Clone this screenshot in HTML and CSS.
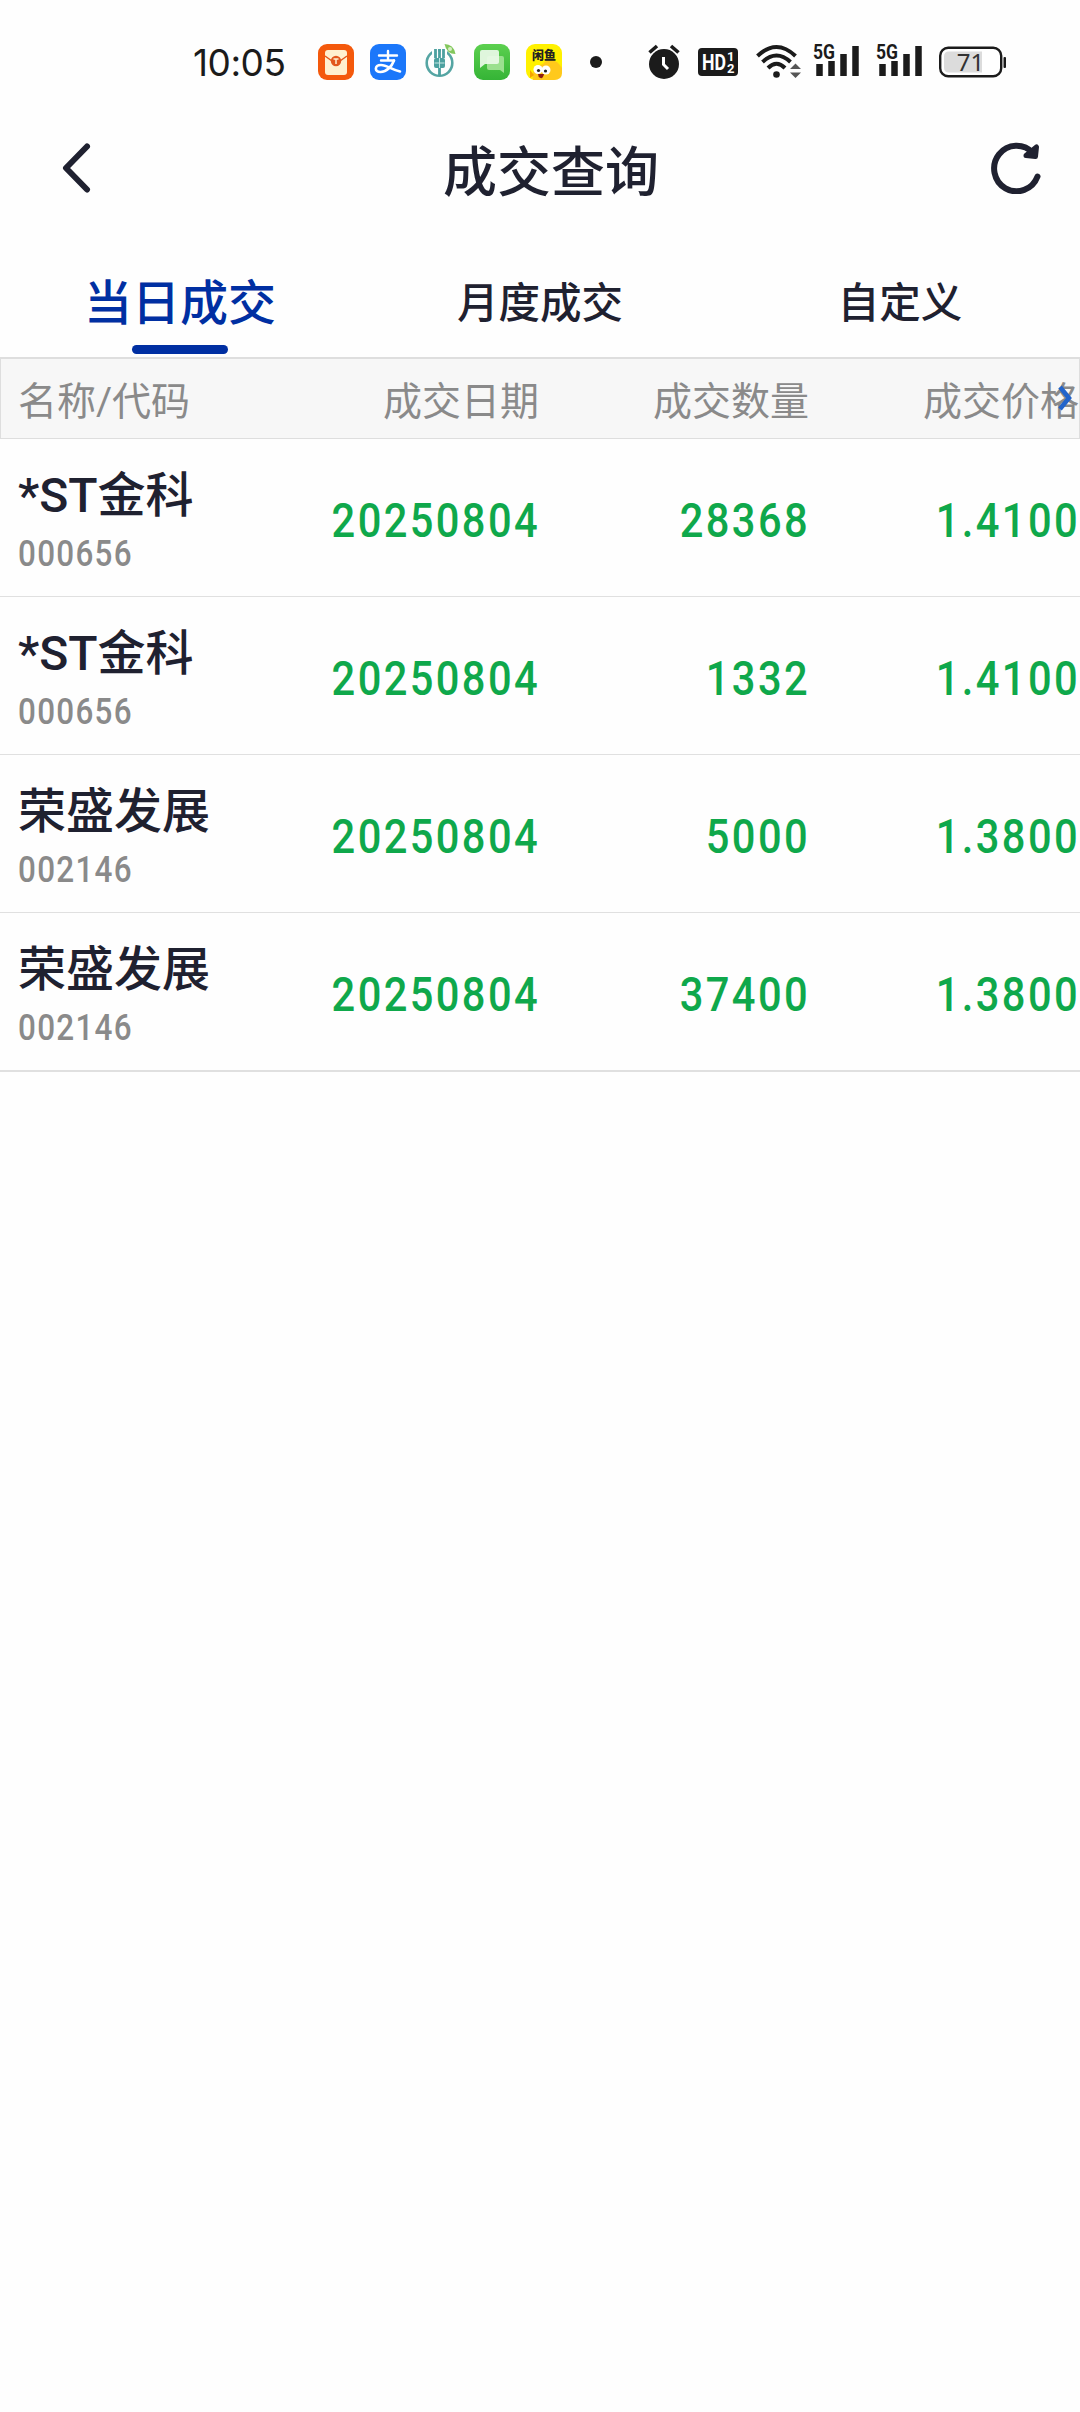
FILE: index.html
```html
<!DOCTYPE html>
<html lang="zh-CN">
<head>
    <meta charset="UTF-8">
    <meta name="viewport" content="width=device-width, initial-scale=1.0">
    <title>成交查询</title>
    <link rel="stylesheet" href="styles.css">
</head>
<body>
    <!-- 状态栏 -->
    <div class="status-bar">
        <span class="time">10:05</span>
        <div class="app-icons">
            <svg width="36" height="36" viewBox="0 0 36 36">
                <rect width="36" height="36" rx="9" fill="#f4590c"/>
                <rect x="7" y="6" width="22" height="25" rx="3" fill="#fff0cf"/>
                <path d="M7 12 L14 17 M29 12 L22 17" stroke="#e2571d" stroke-width="1.5" fill="none"/>
                <circle cx="18" cy="17" r="5.2" fill="#e2571d"/>
                <path d="M15.5 15 H20.5 M18 15 V20" stroke="#fff0cf" stroke-width="1.5"/>
            </svg>
            <svg width="36" height="36" viewBox="0 0 36 36">
                <rect width="36" height="36" rx="9" fill="#1b77fa"/>
                <g fill="none" stroke="#fff" stroke-linecap="round">
                    <path d="M9 11.5 H27 M18 7 V16 M11 16.5 H24" stroke-width="2.4"/>
                    <path d="M24 16.5 C22 22 17 28 10.5 28 C4 28 4.500 21 11 21 C17 21 22 26 30 27.500" stroke-width="2.6"/>
                </g>
            </svg>
            <svg width="36" height="36" viewBox="0 0 36 36">
                <circle cx="17.500" cy="19" r="12.8" fill="none" stroke="#55a5a3" stroke-width="2.6"/>
                <path d="M13 5 V13 M22 5 V13" fill="none" stroke="#fff" stroke-width="6"/>
                <path d="M17.500 32 V5 M13.500 5 V14 M21.500 5 V14" fill="none" stroke="#4da1a0" stroke-width="2.8"/>
                <rect x="12" y="14" width="11" height="10" rx="2" fill="#4da1a0"/>
                <path d="M12.500 19 H22.500 M17.500 14 V24" stroke="#c5e6e3" stroke-width="1"/>
                <path d="M22.500 0 Q31.500 0 33.500 10 Q24.500 10 22.500 0Z" fill="#83c75c"/>
                <circle cx="28" cy="5" r="2" fill="#d6efc4"/>
            </svg>
            <svg width="36" height="36" viewBox="0 0 36 36">
                <defs>
                    <linearGradient id="msg" x1="0" y1="0" x2="0" y2="1">
                        <stop offset="0" stop-color="#5cd04f"/>
                        <stop offset="1" stop-color="#35b436"/>
                    </linearGradient>
                </defs>
                <rect width="36" height="36" rx="9" fill="url(#msg)"/>
                <path d="M15 12 H28 Q30 12 30 14 V29 L26 26 H15 Q13 26 13 24 V14 Q13 12 15 12Z" fill="#9be08f"/>
                <path d="M8 6 H23 Q25 6 25 8 V18 Q25 20 23 20 H11 L6 24 V8 Q6 6 8 6Z" fill="#ecfae9" opacity=".92"/>
            </svg>
            <svg width="36" height="36" viewBox="0 0 36 36">
                <rect width="36" height="36" rx="9" fill="#fff100"/>
                <path d="M7 36 C5 28 9 22 17 20 C20 15 29 15 33 20 L36 24 V29 Q36 36 28 36Z" fill="#ffc91b"/>
                <path d="M4 26 L8 31 L4 34Z" fill="#f6a400"/>
                <circle cx="12" cy="25.500" r="4.500" fill="#fff"/>
                <circle cx="20" cy="26" r="4.500" fill="#fff"/>
                <circle cx="12.500" cy="26.500" r="1.600" fill="#222"/>
                <circle cx="19.500" cy="27" r="1.600" fill="#222"/>
                <path d="M12 30 H18 Q17 35 14.500 34 Q12 33 12 30Z" fill="#8d1c10"/>
                <text x="18" y="15.500" text-anchor="middle" class="fish-text">闲鱼</text>
            </svg>
        </div>
        <span class="dot"></span>
        <div class="sys-icons">
            <svg class="alarm" width="32" height="36" viewBox="0 0 32 36">
                <circle cx="16" cy="20" r="15" fill="#1b1b1b"/>
                <path d="M1.500 8.500 L9 2 M23 2 L30.500 8.500" stroke="#1b1b1b" stroke-width="3.600"/>
                <path d="M15.500 13 V20.500 L20 25" fill="none" stroke="#fff" stroke-width="3"/>
            </svg>
            <svg class="hd" width="40" height="28" viewBox="0 0 40 28">
                <rect width="40" height="28" rx="4" fill="#1b1b1b"/>
                <text x="4" y="22" class="hd-text" textLength="24" lengthAdjust="spacingAndGlyphs">HD</text>
                <text x="29" y="13" class="hd-num">1</text>
                <text x="29" y="25" class="hd-num">2</text>
            </svg>
            <svg class="wifi" width="46" height="36" viewBox="0 0 46 36">
                <g fill="none" stroke="#1b1b1b" stroke-width="4">
                    <path d="M1.500 12 Q20.500 -6 39.500 12"/>
                    <path d="M6.500 18 Q20.500 5 34.500 18"/>
                    <path d="M12 24 Q20.500 15.500 29 24"/>
                </g>
                <circle cx="20.500" cy="30.500" r="3.300" fill="#1b1b1b"/>
                <path d="M34 25 L39.500 19.500 L45 25Z M34 28.500 H45 L39.500 34Z" fill="#555"/>
            </svg>
            <svg class="signal" width="47" height="46" viewBox="0 -5 47 46">
                <text x="0" y="15" class="net-text" textLength="22" lengthAdjust="spacingAndGlyphs">5G</text>
                <path d="M6.500 20V32M18.500 17V32M30.500 10V32M42.500 2V32" stroke="#1b1b1b" stroke-width="6.500"/>
            </svg>
            <svg class="signal" width="47" height="46" viewBox="0 -5 47 46">
                <text x="0" y="15" class="net-text" textLength="22" lengthAdjust="spacingAndGlyphs">5G</text>
                <path d="M6.500 20V32M18.500 17V32M30.500 10V32M42.500 2V32" stroke="#1b1b1b" stroke-width="6.500"/>
            </svg>
            <svg class="battery" width="68" height="32" viewBox="0 0 68 32">
                <rect x="1.200" y="1.700" width="61" height="28.500" rx="8" fill="#fff" stroke="#1b1b1b" stroke-width="2.400"/>
                <path d="M10 5.500 H43 V26.500 H10 Q5 26.500 5 21.500 V10.500 Q5 5.500 10 5.500Z" fill="#dcdcdc"/>
                <rect x="64.500" y="11" width="2.500" height="11" rx="1" fill="#1b1b1b"/>
                <text x="31.500" y="24.500" text-anchor="middle" class="battery-text">71</text>
            </svg>
        </div>
    </div>

    <!-- 标题栏 -->
    <div class="nav-bar">
        <svg class="back" width="30" height="52" viewBox="0 0 30 52">
            <path d="M26 4.500 L5 26 L26 47.500" fill="none" stroke="#1f2130" stroke-width="6" stroke-linecap="round" stroke-linejoin="round"/>
        </svg>
        <h1>成交查询</h1>
        <svg class="refresh" width="50" height="52" viewBox="0 0 50 52">
            <path d="M46.500 34.500 A22.400 22.800 0 1 1 42 11" fill="none" stroke="#1f2130" stroke-width="6" stroke-linecap="round"/>
            <path d="M45.500 5 L44.500 14.500 L35 13.500Z" fill="#1f2130" stroke="#1f2130" stroke-width="5" stroke-linejoin="round"/>
        </svg>
    </div>

    <!-- 标签页 -->
    <div class="tabs">
        <div class="tab active">当日成交</div>
        <div class="tab">月度成交</div>
        <div class="tab">自定义</div>
    </div>

    <!-- 成交列表 -->
    <div class="table">
        <div class="table-head">
            <span>名称/代码</span>
            <span>成交日期</span>
            <span>成交数量</span>
            <span>成交价格</span>
            <svg class="more" width="16" height="26" viewBox="0 0 16 26">
                <path d="M3 2 L12 13 L3 24" fill="none" stroke="#2264cb" stroke-width="4.500"/>
            </svg>
        </div>
        <div class="row">
            <div class="stock"><p class="name">*ST金科</p><p class="code">000656</p></div>
            <span class="value">20250804</span>
            <span class="value">28368</span>
            <span class="value">1.4100</span>
        </div>
        <div class="row">
            <div class="stock"><p class="name">*ST金科</p><p class="code">000656</p></div>
            <span class="value">20250804</span>
            <span class="value">1332</span>
            <span class="value">1.4100</span>
        </div>
        <div class="row">
            <div class="stock"><p class="name">荣盛发展</p><p class="code">002146</p></div>
            <span class="value">20250804</span>
            <span class="value">5000</span>
            <span class="value">1.3800</span>
        </div>
        <div class="row">
            <div class="stock"><p class="name">荣盛发展</p><p class="code">002146</p></div>
            <span class="value">20250804</span>
            <span class="value">37400</span>
            <span class="value">1.3800</span>
        </div>
    </div>
</body>
</html>
```
FILE: styles.css
```css
* {
    box-sizing: border-box;
    margin: 0;
    padding: 0;
}

body {
    width: 1080px;
    min-height: 2412px;
    background: #fefefe;
    color: #1f2130;
    font-family: Roboto, "Noto Sans CJK SC", sans-serif;
    overflow-x: hidden;
}

svg {
    display: block;
    flex: none;
}

/* 状态栏 */
.status-bar {
    display: flex;
    align-items: center;
    height: 124px;
    padding-left: 193px;
    color: #1b1b1b;
}

.time {
    width: 125px;
    font-family: Inter, sans-serif;
    font-size: 37px;
    letter-spacing: -0.5px;
}

.app-icons {
    display: flex;
    gap: 16px;
}

.fish-text {
    font-family: "Noto Sans CJK SC", sans-serif;
    font-size: 12px;
    font-weight: 900;
    fill: #222;
}

.dot {
    width: 12px;
    height: 12px;
    margin-left: 28px;
    border-radius: 50%;
    background: #1b1b1b;
}

.sys-icons {
    display: flex;
    align-items: center;
    margin-left: 46px;
}

.hd {
    margin-left: 18px;
}

.wifi {
    margin-left: 18px;
}

.signal {
    margin-left: 11px;
}

.signal + .signal {
    margin-left: 16px;
}

.battery {
    margin-left: 16px;
}

.hd-text {
    font-size: 22px;
    font-weight: 700;
    fill: #fff;
}

.hd-num {
    font-size: 13px;
    font-weight: 700;
    fill: #fff;
}

.net-text {
    font-size: 21px;
    font-weight: 700;
    fill: #1b1b1b;
}

.battery-text {
    font-family: "Noto Sans", sans-serif;
    font-size: 24px;
    fill: #333;
}

/* 标题栏 */
.nav-bar {
    display: flex;
    align-items: center;
    justify-content: space-between;
    height: 88px;
    padding: 0 39px 0 61px;
}

.nav-bar h1 {
    margin: 12px 0 0 10px;
    font-size: 54px;
    line-height: 76px;
    font-weight: 500;
}

.back {
    margin-right: 10px;
}

/* 标签页 */
.tabs {
    display: grid;
    grid-template-columns: repeat(3, 1fr);
    height: 145px;
    padding-top: 57px;
    text-align: center;
}

.tab {
    font-size: 41.5px;
    line-height: 70px;
    font-weight: 500;
}

.tab.active {
    color: #002fa2;
    font-size: 48px;
}

.tab.active::after {
    content: "";
    display: block;
    width: 96px;
    height: 9px;
    margin: 6px auto 0;
    border-radius: 5px;
    background: #002fa2;
}

/* 成交列表 */
.table {
    border-bottom: 2px solid #e0e0e0;
}

.table-head,
.row {
    display: grid;
    grid-template-columns: repeat(4, 270px);
    align-items: center;
}

.table-head {
    position: relative;
    height: 82px;
    padding-top: 8px;
    background: #f7f7f7;
    box-shadow: inset 0 2px #dedede, inset 0 -1px #dedede, inset 1px 0 #dedede, inset -1px 0 #dedede;
    color: #8a8a8a;
    font-size: 39px;
    line-height: 60px;
}

.table-head span {
    padding-right: 1px;
    text-align: right;
    white-space: nowrap;
}

.table-head span:first-child {
    padding-left: 18px;
    text-align: left;
}

.more {
    position: absolute;
    top: 28px;
    right: 7px;
}

.row {
    height: 158px;
    border-bottom: 1px solid #e0e0e0;
}

.row:last-child {
    height: 157px;
    border-bottom: none;
}

.stock {
    padding: 10px 0 0 18px;
}

.name {
    font-size: 48px;
    line-height: 60px;
    font-weight: 500;
}

/* 数字压窄显示 */
.code {
    margin-top: 3px;
    color: #8a8a8a;
    font-size: 37px;
    line-height: 50px;
    font-weight: 500;
    letter-spacing: 1.5px;
    transform: scaleX(0.85);
    transform-origin: left;
}

.value {
    padding-top: 6px;
    color: #0fa84b;
    font-size: 49px;
    line-height: 60px;
    font-weight: 500;
    letter-spacing: 2.8px;
    text-align: right;
    transform: scaleX(0.85);
    transform-origin: right;
}
```
